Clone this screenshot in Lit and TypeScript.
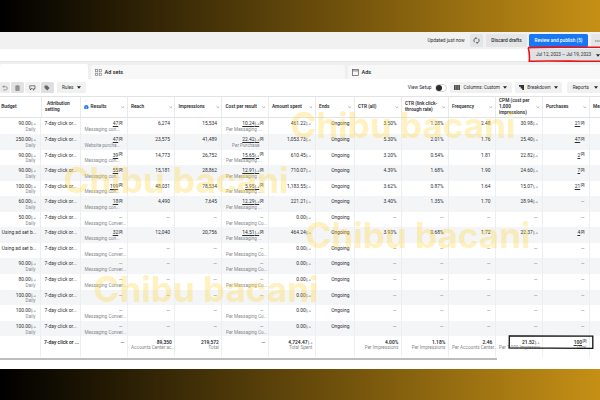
import { LitElement, html, svg, css, nothing } from "lit";
import { customElement } from "lit/decorators.js";
import { classMap } from "lit/directives/class-map.js";

type Row = {
  budget: string; money: boolean;
  results: string; resultsSub: string;
  reach: string; impressions: string;
  cost: string; costSub: string;
  spent: string; ctr: string; link: string; freq: string; cpm: string; purchases: string;
};

const MC = "Messaging Conver...";
const MN = "Messaging con...";
const PM = "Per Messaging ...";
const PC = "Per Messaging Co...";

const live = (budget: string, results: string, resultsSub: string, reach: string, impressions: string,
  cost: string, costSub: string, spent: string, ctr: string, link: string, freq: string, cpm: string,
  purchases: string, money = true): Row =>
  ({ budget, money, results, resultsSub, reach, impressions, cost, costSub, spent, ctr, link, freq, cpm, purchases });
const idle = (budget: string, money = true, sub = true): Row =>
  live(budget, "", sub ? MC : "", "", "", "", sub ? PC : "", "0.00", "", "", "", "", "", money);

const ROWS: Row[] = [
  live("90.00", "47", MN, "6,274", "15,534", "10.24", PM, "461.22", "3.50%", "1.28%", "2.48", "30.98", "21"),
  live("250.00", "47", "Website purcha...", "23,575", "41,489", "22.42", "Per Purchase", "1,053.73", "5.30%", "2.01%", "1.76", "25.40", "47"),
  live("90.00", "39", MN, "14,773", "26,752", "15.65", PM, "610.45", "3.20%", "0.54%", "1.81", "22.82", "2"),
  live("90.00", "55", MN, "15,181", "28,862", "12.91", PM, "710.07", "4.39%", "1.68%", "1.90", "24.60", "7"),
  live("100.00", "199", MN, "48,031", "78,534", "5.95", PM, "1,183.55", "3.62%", "0.87%", "1.64", "15.07", "21"),
  live("60.00", "18", MN, "4,490", "7,645", "12.29", PM, "221.21", "3.40%", "1.35%", "1.70", "28.94", ""),
  idle("50.00"),
  live("Using ad set b...", "32", MN, "12,040", "20,756", "14.51", PM, "464.24", "3.93%", "0.68%", "1.72", "22.37", "4", false),
  idle("Using ad set b...", false),
  idle("90.00"),
  idle("80.00"),
  idle("100.00", true, false),
  idle("100.00"),
  idle("100.00"),
];

const HEADS = ["Results", "Reach", "Impressions", "Cost per result", "Amount spent", "Ends", "CTR (all)",
  "CTR (link click-through rate)", "Frequency", "CPM (cost per 1,000 impressions)", "Purchases"];

const chevron = html`<svg class="chev" viewBox="0 0 4 3"><path d="M.5 .7 2 2.1 3.5 .7" fill="none" stroke="#8a8d91" stroke-width=".8"/></svg>`;
const caret = html`<svg class="caret" viewBox="0 0 4 3"><path d="M0 .2H4L2 2.8Z" fill="#222"/></svg>`;

const money = (v: string) => html`${v}<bdi class="cur">د.إ</bdi>`;
const note = html`<sup><bdi dir="ltr">[2]</bdi></sup>`;
const dash = html`<span class="dash">—</span>`;

@customElement("app-root")
export class AppRoot extends LitElement {
  static styles = css`
    :host { display: flex; flex-direction: column; position: relative; width: 600px; height: 400px; overflow: hidden;
      box-sizing: border-box; padding: 32px 0 31px; font: 4.9px/6px Roboto, "DejaVu Sans", sans-serif; color: #2b2d30;
      background: linear-gradient(90deg, #000 0%, #c69016 100%); }
    * { box-sizing: border-box; }
    svg { display: block; flex: none; }
    .app { display: flex; flex-direction: column; height: 337px; background: #fff; white-space: nowrap; }
    .top { display: flex; flex: none; align-items: center; height: 17px; background: #f1f1f1; padding-left: 427.5px; }
    .updated { flex: none; width: 42px; font-size: 4.8px; }
    .btn { display: flex; flex: none; align-items: center; justify-content: center; height: 12.5px; border-radius: 1.5px; background: #e4e5e6; }
    .refresh { width: 13.5px; margin-right: 3px; }
    .discard { width: 41px; margin-right: 2px; font-size: 4.85px; font-weight: 500; }
    .publish { width: 59px; margin-right: 2.5px; background: #1877f2; color: #fff; font-size: 4.75px; font-weight: 500; }
    .more { width: 14px; }
    .dates { display: flex; flex: none; height: 12px; justify-content: flex-end; }
    .date { display: flex; align-items: center; width: 70px; padding-left: 6px; gap: 5px; background: #dfe1e2; font-size: 4.62px; }
    .tabs { display: flex; flex: none; align-items: flex-end; height: 18px; background: #efefef; gap: 2.5px; border-top: 1px solid #e6e6e6; }
    .tab { display: flex; align-items: center; height: 14px; gap: 2.5px; padding-left: 4.5px; font-size: 5.5px; font-weight: 600;
      background: #f8f8f8; border-radius: 2px 2px 0 0; }
    .tab.on { width: 88px; height: 15px; background: #fff; }
    .tab.sets { width: 254.5px; }
    .tab.ads { flex: 1; }
    .tools { display: flex; flex: none; align-items: center; height: 17px; }
    .tool { display: flex; flex: none; align-items: center; justify-content: center; height: 11.5px; background: #f1f1f1; border-radius: 1.5px; gap: 4px; font-size: 4.7px; }
    .undo { width: 9.7px; margin-right: 1px; background: #ebebeb; }
    .trash { width: 13.5px; margin-right: 1px; background: #e2e2e2; }
    .dup { width: 14.5px; margin-right: 1px; }
    .tag { width: 13.5px; margin-right: 3px; background: #dfdfdf; }
    .rules { width: 29px; }
    .setup { flex: none; margin-left: 321.5px; width: 27px; font-size: 4.8px; }
    .toggle { width: 12px; height: 8px; margin-right: 3px; border: .8px solid #d5d5d5; border-radius: 4px; display: flex; align-items: center; background: #fff; flex: none; }
    .knob { width: 6px; height: 6px; border-radius: 50%; background: #2a2a2a; }
    .columns { width: 62px; margin-right: 3px; gap: 3px; font-size: 4.6px; }
    .breakdown { width: 47.5px; margin-right: 5px; gap: 3.5px; }
    .reports { width: 40px; justify-content: flex-start; padding-left: 5.5px; gap: 5px; }
    .caret { width: 4px; height: 3px; }
    .grid { display: grid; flex: none; grid-template-columns: 40.5px 40px 47px 47.5px 47px 46.5px 47px 39px 47px 47px 47px 47px 47px 10.5px; }
    .head { height: 22.4px; border-top: 1px solid #e2e3e5; border-bottom: 1px solid #e2e3e5; font-size: 4.75px; font-weight: 600; line-height: 6px; }
    .th { display: flex; align-items: center; padding: 0 2px 0 3.5px; border-right: 1px solid #e9eaec; white-space: normal; min-width: 0; gap: 2px; }
    .th.b { padding-left: 1.3px; border: 0; }
    .th.a { border-left: 1px solid #e9eaec; }
    .th.a span { width: 30px; text-indent: 2px; }
    .lab { flex: 1; min-width: 0; }
    .nw { white-space: nowrap; }
    .chev { width: 3.5px; height: 2.6px; }
    .info { width: 4.6px; height: 4.6px; }
    .body { height: 15.57px; }
    .body.alt { background: #f4f5f7; }
    .td { min-width: 0; padding: 2px 4px 0 4px; text-align: right; border-right: 1px solid #eceef0; }
    .td.l { text-align: left; }
    .td.using { padding-left: 1.8px; }
    .td.last { border: 0; }
    .val { height: 6px; line-height: 6px; }
    .sub { font-size: 4.65px; line-height: 6px; color: #85888c; margin-top: .8px; }
    .sub.left { text-align: left; }
    .sub.in { padding-right: 4px; }
    .cur { font: 4.2px/5px "DejaVu Sans", sans-serif; margin-left: .3px; }
    .dash { color: #777; }
    .u { text-decoration: underline; text-decoration-thickness: .6px; text-underline-offset: .8px; }
    sup { font-size: 3.4px; line-height: 0; vertical-align: 1.3px; margin-left: .5px; font-weight: 600; }
    .total { height: 21px; font-weight: 600; }
    .total .td { padding: 2.3px 2.2px 0 3.5px; }
    .total .sub { font-weight: 400; margin-top: .7px; }
    .bar { width: 497px; height: 2px; margin-top: .7px; background: #bcbdbe; }
    .marks { position: absolute; inset: 0; width: 600px; height: 400px; }
    .wm { font: 700 35px Inter, sans-serif; fill: #ffd84a; fill-opacity: .36; }
  `;

  private row(r: Row, i: number) {
    const v = (s: string, link = false) =>
      s ? (link ? html`<span class="u">${s}</span>${note}` : s) : dash;
    return html`<div class=${classMap({ grid: true, body: true, alt: i % 2 === 1 })}>
      <div class=${classMap({ td: true, l: !r.money, using: !r.money })}>
        ${r.money ? html`<div class="val">${money(r.budget)}</div><div class="sub">Daily</div>` : r.budget}
      </div>
      <div class="td l">7-day click or...</div>
      <div class="td"><div class="val">${v(r.results, true)}</div><div class="sub left">${r.resultsSub}</div></div>
      <div class="td">${v(r.reach)}</div>
      <div class="td">${v(r.impressions)}</div>
      <div class="td"><div class="val">${r.cost ? html`<span class="u">${money(r.cost)}</span>${note}` : dash}</div>
        <div class=${classMap({ sub: true, left: r.costSub !== "Per Purchase", in: r.costSub === "Per Purchase" })}>${r.costSub}</div></div>
      <div class="td"><div class="val">${money(r.spent)}</div></div>
      <div class="td">Ongoing</div>
      <div class="td">${v(r.ctr)}</div>
      <div class="td">${v(r.link)}</div>
      <div class="td">${v(r.freq)}</div>
      <div class="td"><div class="val">${r.cpm ? money(r.cpm) : dash}</div></div>
      <div class="td"><div class="val">${v(r.purchases, true)}</div></div>
      <div class="td last"></div>
    </div>`;
  }

  private total() {
    const c = (value: unknown, sub = "") => html`<div class="td"><div class="val">${value}</div><div class="sub">${sub}</div></div>`;
    return html`<div class="grid total">
      ${c("")}<div class="td l">7-day click or ...</div>${c(dash)}
      ${c("89,350", "Accounts Center ac...")}${c("219,572", "Total")}${c(dash)}
      ${c(money("4,724.47"), "Total Spent")}${c("")}${c("4.00%", "Per Impressions")}${c("1.18%", "Per Impressions")}
      ${c("2.46", "Per Accounts Center...")}${c(money("21.52"), "Per 1,000 Impressio...")}
      ${c(html`<span class="u">100</span>${note}`, "Total")}<div></div>
    </div>`;
  }

  render() {
    return html`<div class="app">
      <div class="top">
        <span class="updated">Updated just now</span>
        <div class="btn refresh"><svg width="7" height="7" viewBox="0 0 7 7"><path d="M1.6 5.3A2.5 2.5 0 0 1 3 1.1M5.4 1.7A2.5 2.5 0 0 1 4 5.9M2.5.4 3.6 1.1 2.8 2M4.5 6.6 3.4 5.9 4.2 5" fill="none" stroke="#444" stroke-width=".8"/></svg></div>
        <div class="btn discard">Discard drafts</div>
        <div class="btn publish">Review and publish (5)</div>
        <div class="btn more"><svg width="6" height="2" viewBox="0 0 6 2"><path d="M.3 1H1.4M2.4 1H3.5M4.5 1H5.6" stroke="#444"/></svg></div>
      </div>
      <div class="dates"><div class="date"><span>Jul 12, 2023 – Jul 19, 2023</span>${caret}</div></div>
      <div class="tabs">
        <div class="tab on"></div>
        <div class="tab sets"><svg width="7" height="7" viewBox="0 0 7 7" fill="none" stroke="#777" stroke-width=".6"><rect x=".4" y=".4" width="2.4" height="2.4"/><rect x="4.2" y=".4" width="2.4" height="2.4"/><rect x=".4" y="4.2" width="2.4" height="2.4"/><rect x="4.2" y="4.2" width="2.4" height="2.4"/></svg>Ad sets</div>
        <div class="tab ads"><svg width="7" height="7" viewBox="0 0 7 7" fill="none" stroke="#555" stroke-width=".7"><rect x=".5" y=".5" width="5.8" height="6"/><path d="M.5 1.9H6.3"/></svg>Ads</div>
      </div>
      <div class="tools">
        <div class="tool undo"><svg width="6" height="6" viewBox="0 0 6 6"><path d="M1 1.6H3.6A1.6 1.6 0 0 1 3.6 4.9H1.2M2 .4.8 1.6 2 2.8" fill="none" stroke="#777" stroke-width=".7"/></svg></div>
        <div class="tool trash"><svg width="5" height="6" viewBox="0 0 5 6"><path d="M.8 1.5H4.2V5.6H.8ZM.4 1H4.6M1.8.5H3.2" fill="#999" stroke="#777" stroke-width=".6"/></svg></div>
        <div class="tool dup"><svg width="7" height="6" viewBox="0 0 7 6"><path d="M.7.8H6V3.6H4.8L5 5.3 3.2 3.6H2L1.6 5 .9 3.6Z" fill="none" stroke="#444" stroke-width=".7"/></svg></div>
        <div class="tool tag"><svg width="6" height="6" viewBox="0 0 6 6"><path d="M.5 1 1 .5 3.2.6 5.6 3.1 3.3 5.5.6 3Z" fill="#666"/></svg></div>
        <div class="tool rules"><span>Rules</span>${caret}</div>
        <span class="setup">View Setup</span>
        <div class="toggle"><div class="knob"></div></div>
        <div class="tool columns"><svg width="6" height="5" viewBox="0 0 6 5"><path d="M.9 0V5M3 0V5M5.1 0V5" stroke="#222" stroke-width="1.4"/></svg><span>Columns: Custom</span>${caret}</div>
        <div class="tool breakdown"><svg width="5" height="5" viewBox="0 0 5 5"><path d="M0 0H5V5H3.2V3.4H1.7V1.7H0Z" fill="#333"/></svg><span>Breakdown</span>${caret}</div>
        <div class="tool reports"><span>Reports</span>${caret}</div>
      </div>
      <div class="grid head">
        <div class="th b">Budget</div>
        <div class="th a"><span>Attribution setting</span></div>
        ${HEADS.map((h, i) => html`<div class="th">
          ${i === 0 ? html`<svg class="info" viewBox="0 0 5 5"><circle cx="2.5" cy="2.5" r="2.4" fill="#1877f2"/><path d="M2.5 1V1.7M2.5 2.2V4" stroke="#fff" stroke-width=".7"/></svg>` : nothing}
          <span class=${classMap({ lab: true, nw: !h.startsWith("CTR (l") && !h.startsWith("CPM") })}>${h}</span>${chevron}</div>`)}
        <div class="th nw" style="border:0">Me</div>
      </div>
      ${ROWS.map((r, i) => this.row(r, i))}
      ${this.total()}
      <div class="bar"></div>
    </div>
    <svg class="marks" viewBox="0 0 600 400">
      ${[[290.5, 138], [63.5, 192.5], [305.5, 247.5], [93.5, 302]].map(([x, y]) =>
        svg`<text class="wm" x=${x} y=${y} textLength="225" lengthAdjust="spacingAndGlyphs">Chibu bacani</text>`)}
      <path d="M528 47.6C545 46.6 575 47.3 602 47.3M528.2 47.6C529.5 52 529.6 57 529.3 61.2C550 60.4 580 61.6 602 61.2" fill="none" stroke="#e8131b" stroke-width="1.6"/>
      <path d="M509.3 335.8 592.8 336.2 592.8 348.3 509.2 347.9Z" fill="none" stroke="#111" stroke-width="1.3"/>
    </svg>`;
  }
}
